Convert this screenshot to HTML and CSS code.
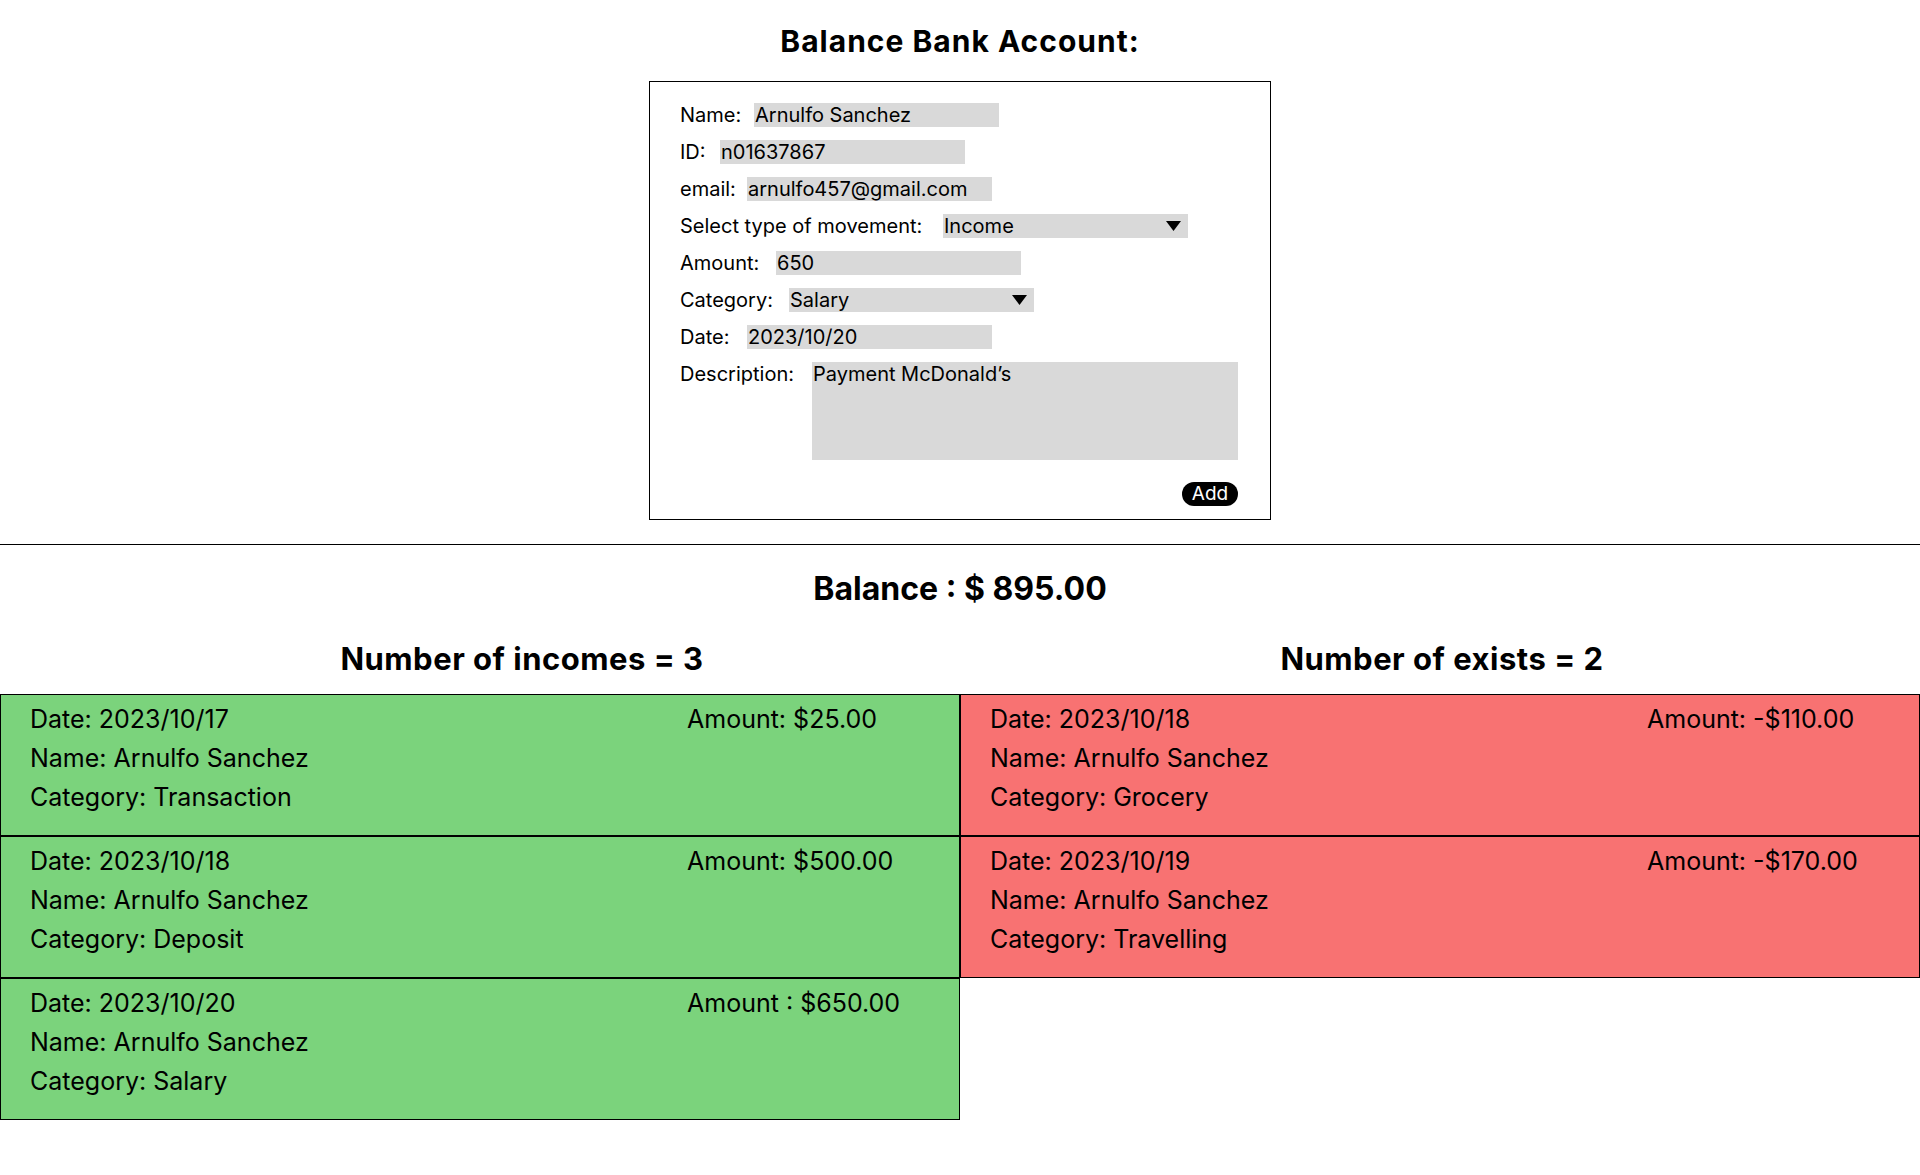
FILE: index.html
```
<!DOCTYPE html>
<html lang="en">
<head>
<meta charset="utf-8">
<title>Balance Bank Account</title>
<link rel="stylesheet" href="styles.css">
</head>
<body>
<h1 class="title">Balance Bank Account:</h1>

<form class="account-form">
  <div class="row">
    <span class="label lw-name">Name:</span>
    <span class="field">Arnulfo Sanchez</span>
  </div>
  <div class="row">
    <span class="label lw-id">ID:</span>
    <span class="field">n01637867</span>
  </div>
  <div class="row">
    <span class="label lw-email">email:</span>
    <span class="field">arnulfo457@gmail.com</span>
  </div>
  <div class="row">
    <span class="label lw-type">Select type of movement:</span>
    <span class="field select">Income<svg class="caret" width="15" height="10" viewBox="0 0 15 10"><polygon points="0,0 15,0 7.5,10" fill="#000"/></svg></span>
  </div>
  <div class="row">
    <span class="label lw-amount">Amount:</span>
    <span class="field">650</span>
  </div>
  <div class="row">
    <span class="label lw-category">Category:</span>
    <span class="field select">Salary<svg class="caret" width="15" height="10" viewBox="0 0 15 10"><polygon points="0,0 15,0 7.5,10" fill="#000"/></svg></span>
  </div>
  <div class="row">
    <span class="label lw-date">Date:</span>
    <span class="field">2023/10/20</span>
  </div>
  <div class="row">
    <span class="label lw-desc">Description:</span>
    <span class="field textarea">Payment McDonald’s</span>
  </div>
  <div class="actions">
    <span class="btn-add">Add</span>
  </div>
</form>

<hr class="divider">

<h2 class="balance">Balance : $ 895.00</h2>

<section class="movements">
  <div class="column">
    <h3 class="col-title col-title-left">Number of incomes = 3</h3>
    <div class="card income">
      <div class="card-info">
        <div>Date: 2023/10/17</div>
        <div>Name: Arnulfo Sanchez</div>
        <div>Category: Transaction</div>
      </div>
      <div class="card-amount">Amount: $25.00</div>
    </div>
    <div class="card income">
      <div class="card-info">
        <div>Date: 2023/10/18</div>
        <div>Name: Arnulfo Sanchez</div>
        <div>Category: Deposit</div>
      </div>
      <div class="card-amount">Amount: $500.00</div>
    </div>
    <div class="card income">
      <div class="card-info">
        <div>Date: 2023/10/20</div>
        <div>Name: Arnulfo Sanchez</div>
        <div>Category: Salary</div>
      </div>
      <div class="card-amount">Amount : $650.00</div>
    </div>
  </div>
  <div class="column">
    <h3 class="col-title col-title-right">Number of exists = 2</h3>
    <div class="card expense">
      <div class="card-info">
        <div>Date: 2023/10/18</div>
        <div>Name: Arnulfo Sanchez</div>
        <div>Category: Grocery</div>
      </div>
      <div class="card-amount">Amount: -$110.00</div>
    </div>
    <div class="card expense">
      <div class="card-info">
        <div>Date: 2023/10/19</div>
        <div>Name: Arnulfo Sanchez</div>
        <div>Category: Travelling</div>
      </div>
      <div class="card-amount">Amount: -$170.00</div>
    </div>
  </div>
</section>
</body>
</html>
```
FILE: styles.css
```
* {
  box-sizing: border-box;
}

body {
  margin: 0;
  font-family: "Inter", "Liberation Sans", sans-serif;
  color: #000;
  background: #fff;
}

.title {
  margin: 24px 0 0;
  font-size: 30px;
  line-height: 34px;
  font-weight: 700;
  letter-spacing: 1px;
  text-align: center;
}

.account-form {
  width: 622px;
  margin: 23px auto 0;
  border: 1px solid #000;
  padding: 21px 32px 13px 30px;
  display: flex;
  flex-direction: column;
  gap: 13px;
  font-size: 20px;
}

.row {
  display: flex;
  align-items: flex-start;
  line-height: 24px;
}

.label {
  flex: none;
  white-space: nowrap;
}

.lw-name { width: 74px; }
.lw-id { width: 40px; }
.lw-email { width: 67px; }
.lw-type { width: 263px; }
.lw-amount { width: 96px; }
.lw-category { width: 109px; }
.lw-date { width: 67px; }
.lw-desc { width: 132px; }

.field {
  width: 245px;
  height: 24px;
  background: #d9d9d9;
  padding-left: 1px;
  white-space: nowrap;
}

.select {
  display: flex;
  align-items: center;
  justify-content: space-between;
  padding-right: 7px;
}

.caret {
  display: block;
  margin-top: -1px;
}

.textarea {
  width: 426px;
  height: 98px;
}

.actions {
  display: flex;
  justify-content: flex-end;
  margin-top: 9px;
}

.btn-add {
  width: 56px;
  height: 24px;
  border-radius: 12px;
  background: #000;
  color: #fff;
  font-size: 19px;
  line-height: 24px;
  text-align: center;
}

.divider {
  margin: 24px 0 0;
  border: 0;
  border-top: 1px solid #000;
  height: 0;
}

.balance {
  margin: 24px 0 0;
  font-size: 32px;
  line-height: 39px;
  font-weight: 700;
  text-align: center;
}

.movements {
  display: grid;
  grid-template-columns: 960px 960px;
  margin-top: 33px;
}

.column {
  display: flex;
  flex-direction: column;
}

.col-title {
  margin: 0 0 17px;
  font-size: 31px;
  line-height: 36px;
  font-weight: 700;
  letter-spacing: 0.5px;
  text-align: center;
}

.col-title-left {
  padding-left: 84px;
}

.col-title-right {
  padding-left: 4px;
}

.card {
  height: 142px;
  border: 1px solid #000;
  display: grid;
  grid-template-columns: 657px 1fr;
  padding: 5px 0 0 29px;
  font-size: 25px;
  line-height: 39px;
}

.income {
  background: #7bd37c;
}

.expense {
  background: #f87272;
}
```
